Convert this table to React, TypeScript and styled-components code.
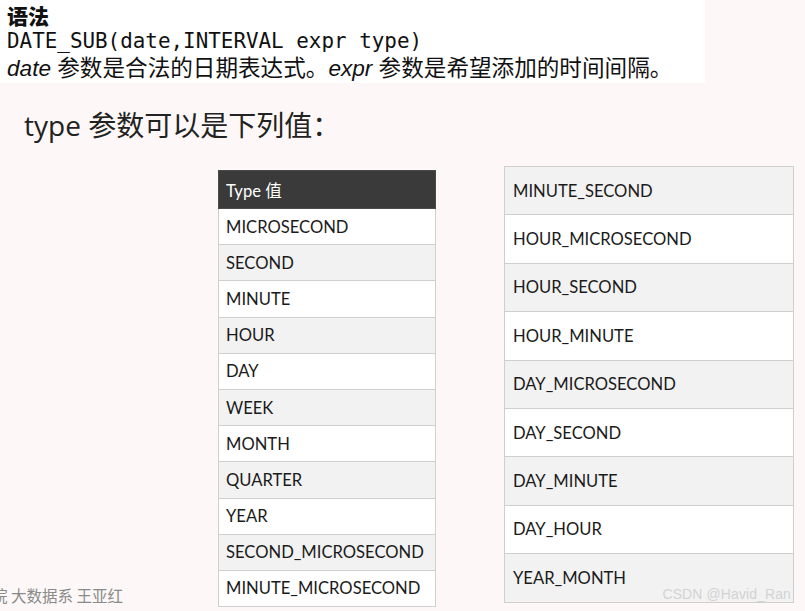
import React from "react";
import styled, { createGlobalStyle } from "styled-components";

const Global = createGlobalStyle`
  html, body { margin: 0; padding: 0; background: #fdf8f7; }
  body { width: 805px; height: 611px; overflow: hidden; font-family: "Liberation Sans", "Noto Sans CJK SC", sans-serif; }
`;

const Page = styled.div`
  width: 805px;
  height: 611px;
  display: flex;
  flex-direction: column;
  position: relative;
`;

const Syntax = styled.section`
  width: 705px;
  height: 83px;
  box-sizing: border-box;
  background: #ffffff;
  padding: 2px 7px 0;
  color: #111;
`;

const SyntaxTitle = styled.div`
  font-family: "Noto Sans CJK SC", sans-serif;
  font-weight: 900;
  font-size: 21px;
  line-height: 26px;
`;

const Code = styled.div`
  font-family: "DejaVu Sans Mono", "Liberation Mono", monospace;
  font-size: 20.9px;
  line-height: 27px;
`;

const Desc = styled.div`
  font-family: "Liberation Sans", "Noto Sans CJK SC", sans-serif;
  font-size: 22.6px;
  line-height: 28px;
  white-space: nowrap;
  em { font-style: italic; }
`;

const Lead = styled.h2`
  margin: 24px 0 0 24px;
  font-family: "Open Sans", "Noto Sans CJK SC", sans-serif;
  font-weight: 400;
  font-size: 28px;
  line-height: 37px;
  color: #222;
`;

const Tables = styled.div`
  flex: 1;
  display: flex;
  align-items: flex-start;
`;

const FooterCol = styled.div`
  width: 218px;
  align-self: stretch;
  display: flex;
  align-items: flex-end;
  overflow: hidden;
`;

const FooterText = styled.span`
  margin: 0 0 5px -8px;
  font-family: "Noto Sans CJK SC", sans-serif;
  font-size: 15.5px;
  color: #8a8a8a;
  white-space: nowrap;
`;

const Table = styled.table<{ $top: number; $width: number; $gap: number }>`
  border-collapse: collapse;
  width: ${(p) => p.$width}px;
  margin-top: ${(p) => p.$top}px;
  margin-left: ${(p) => p.$gap}px;
  font-family: "Lato", "Noto Sans CJK SC", sans-serif;
  font-size: 16.6px;
  color: #1b1b1b;
`;

const HeadCell = styled.th`
  height: 38px;
  box-sizing: border-box;
  background: #3a3a3a;
  color: #fff;
  font-weight: 400;
  text-align: left;
  padding: 0 7px;
  border: 1.5px solid #4a4a4a;
`;

const Cell = styled.td<{ $alt: boolean; $h: number; $pad: number }>`
  height: ${(p) => p.$h}px;
  box-sizing: border-box;
  padding: 0 ${(p) => p.$pad}px;
  background: ${(p) => (p.$alt ? "#f2f2f2" : "#ffffff")};
  border: 1.5px solid #cfcfcf;
  white-space: nowrap;
`;

const Watermark = styled.div`
  position: absolute;
  right: 14px;
  bottom: 9px;
  font-family: "Liberation Sans", sans-serif;
  font-size: 14px;
  color: #d3d3d3;
  letter-spacing: 0.1px;
`;

const left = [
  "MICROSECOND",
  "SECOND",
  "MINUTE",
  "HOUR",
  "DAY",
  "WEEK",
  "MONTH",
  "QUARTER",
  "YEAR",
  "SECOND_MICROSECOND",
  "MINUTE_MICROSECOND",
];

const right = [
  "MINUTE_SECOND",
  "HOUR_MICROSECOND",
  "HOUR_SECOND",
  "HOUR_MINUTE",
  "DAY_MICROSECOND",
  "DAY_SECOND",
  "DAY_MINUTE",
  "DAY_HOUR",
  "YEAR_MONTH",
];

export default function App() {
  return (
    <Page>
      <Global />
      <Syntax>
        <SyntaxTitle>语法</SyntaxTitle>
        <Code>DATE_SUB(date,INTERVAL expr type)</Code>
        <Desc>
          <em>date</em> 参数是合法的日期表达式。<em>expr</em> 参数是希望添加的时间间隔。
        </Desc>
      </Syntax>
      <Lead>type 参数可以是下列值：</Lead>
      <Tables>
        <FooterCol>
          <FooterText>院 大数据系 王亚红</FooterText>
        </FooterCol>
        <Table $top={26} $width={218} $gap={0}>
          <thead>
            <tr>
              <HeadCell>Type 值</HeadCell>
            </tr>
          </thead>
          <tbody>
            {left.map((t, i) => (
              <tr key={t}>
                <Cell $alt={i % 2 === 1} $h={36.2} $pad={7}>
                  {t}
                </Cell>
              </tr>
            ))}
          </tbody>
        </Table>
        <Table $top={22} $width={290} $gap={68}>
          <tbody>
            {right.map((t, i) => (
              <tr key={t}>
                <Cell $alt={i % 2 === 0} $h={48.4} $pad={8}>
                  {t}
                </Cell>
              </tr>
            ))}
          </tbody>
        </Table>
      </Tables>
      <Watermark>CSDN @Havid_Ran</Watermark>
    </Page>
  );
}
